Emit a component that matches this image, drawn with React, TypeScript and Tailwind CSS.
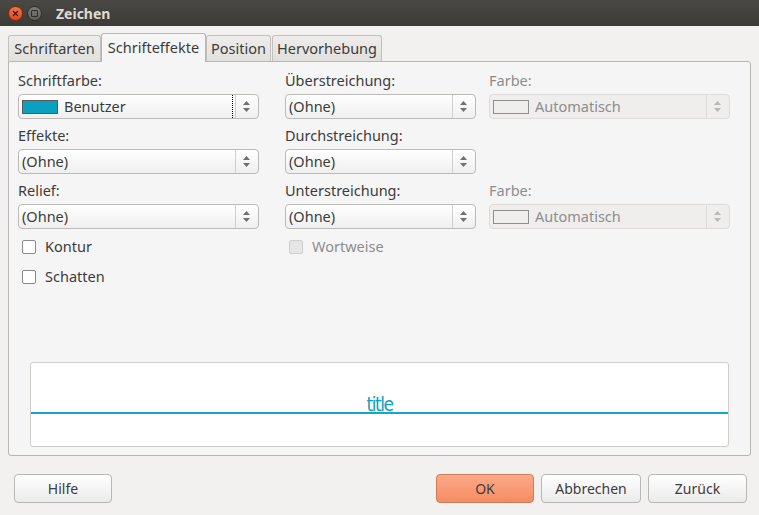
const font = { fontFamily: '"Noto Sans", "DejaVu Sans", sans-serif' };

function Spin({ dim }: { dim?: boolean }) {
  return (
    <div className={`flex h-full w-[22px] flex-col items-center justify-center gap-[3px] border-l ${dim ? "border-[#dcdcdc]" : "border-[#d0d0d0]"}`}>
      <svg width="7" height="4" viewBox="0 0 7 4"><path d="M0 4 L3.5 0 L7 4 Z" fill={dim ? "#b8b8b8" : "#6f6f6f"} /></svg>
      <svg width="7" height="4" viewBox="0 0 7 4"><path d="M0 0 L3.5 4 L7 0 Z" fill={dim ? "#b8b8b8" : "#6f6f6f"} /></svg>
    </div>
  );
}

function Select({ text, swatch, dim, focus }: { text: string; swatch?: string; dim?: boolean; focus?: boolean }) {
  return (
    <div
      className={`flex h-[25px] items-center rounded-[4px] border pl-[3px] pr-[1px] text-[14.5px] ${
        dim
          ? "border-[#dedcda] bg-[#efeeed] text-[#8d8d8d]"
          : "border-[#bdbbb8] bg-gradient-to-b from-white to-[#efefef] text-[#3c3c3c]"
      }`}
    >
      {swatch && (
        <div
          className={`mr-[6px] h-[14px] w-[36px] border ${dim ? "border-[#8f8f8f]" : "border-[#5a5a5a]"}`}
          style={{ background: swatch }}
        />
      )}
      <span className="flex-1 leading-none">{text}</span>
      {focus && <div className="mr-[2px] h-[23px] w-0 border-l border-dotted border-black" />}
      <Spin dim={dim} />
    </div>
  );
}

function Label({ children, dim }: { children: string; dim?: boolean }) {
  return <div className={`h-[30px] pt-[7px] text-[14.5px] leading-[18px] ${dim ? "text-[#8d8d8d]" : "text-[#3c3c3c]"}`}>{children}</div>;
}

function Check({ label, dim }: { label: string; dim?: boolean }) {
  return (
    <div className="flex h-[30px] items-center gap-[9px] pl-[4px] text-[14.5px]">
      <div className={`h-[14px] w-[14px] rounded-[2px] border ${dim ? "border-[#cfcfcf] bg-[#e6e6e6]" : "border-[#8a8a8a] bg-white"}`} />
      <span className={dim ? "text-[#8d8d8d]" : "text-[#3c3c3c]"}>{label}</span>
    </div>
  );
}

function Btn({ children, primary }: { children: string; primary?: boolean }) {
  return (
    <div
      className={`flex h-[29px] items-center justify-center rounded-[4px] border text-[14px] ${
        primary
          ? "border-[#d17a56] bg-gradient-to-b from-[#fba987] to-[#f48c64] text-[#3c3c3c]"
          : "border-[#b9b7b4] bg-gradient-to-b from-white to-[#ebebeb] text-[#3c3c3c]"
      }`}
    >
      {children}
    </div>
  );
}

export default function App() {
  return (
    <div className="flex h-[515px] w-[759px] flex-col bg-[#f2f1f0]" style={font}>
      {/* title bar */}
      <div className="flex h-[26px] items-center bg-gradient-to-b from-[#4a4945] to-[#3b3a36] pl-[8px]">
        <div className="flex h-[15px] w-[15px] items-center justify-center rounded-full border border-[#7a2a10] bg-gradient-to-b from-[#f4744a] to-[#e0481c]">
          <svg width="7" height="7" viewBox="0 0 7 7"><path d="M1 1 L6 6 M6 1 L1 6" stroke="#3b1a0c" strokeWidth="1.3" /></svg>
        </div>
        <div className="ml-[4px] flex h-[15px] w-[15px] items-center justify-center rounded-full border border-[#2e2d2a] bg-gradient-to-b from-[#7d7c78] to-[#5e5d59]">
          <div className="h-[7px] w-[7px] rounded-[1px] border border-[#2f2e2b]" />
        </div>
        <span className="ml-[14px] text-[14px] font-bold text-[#dfdbd2]">Zeichen</span>
      </div>

      {/* tabs */}
      <div className="mt-[6px] flex h-[29px] items-end pl-[8px] text-[14.5px] text-[#3c3c3c]">
        <div className="flex h-[26px] w-[93px] items-center justify-center rounded-t-[3px] border border-b-0 border-[#c2c0bc] bg-gradient-to-b from-[#eeedeb] to-[#e1e0dd]">Schriftarten</div>
        <div className="relative z-10 -mb-px flex h-[29px] w-[105px] items-center justify-center rounded-t-[3px] border border-b-0 border-[#b8b6b2] bg-[#f5f5f5]">Schrifteffekte</div>
        <div className="flex h-[26px] w-[65px] items-center justify-center rounded-t-[3px] border border-b-0 border-[#c2c0bc] bg-gradient-to-b from-[#eeedeb] to-[#e1e0dd]">Position</div>
        <div className="ml-[1px] flex h-[26px] w-[110px] items-center justify-center rounded-t-[3px] border border-b-0 border-[#c2c0bc] bg-gradient-to-b from-[#eeedeb] to-[#e1e0dd]">Hervorhebung</div>
      </div>

      {/* panel */}
      <div className="mx-[8px] h-[395px] rounded-b-[3px] rounded-tr-[3px] border border-[#b8b6b2] bg-[#f5f5f5] px-[9px] pt-[2px]">
        <div className="flex">
          <div className="w-[241px]">
            <Label>Schriftfarbe:</Label>
            <Select text="Benutzer" swatch="#0aa0c0" focus />
            <Label>Effekte:</Label>
            <Select text="(Ohne)" />
            <Label>Relief:</Label>
            <Select text="(Ohne)" />
            <div className="mt-[3px]">
              <Check label="Kontur" />
              <Check label="Schatten" />
            </div>
          </div>
          <div className="ml-[26px] w-[191px]">
            <Label>Überstreichung:</Label>
            <Select text="(Ohne)" />
            <Label>Durchstreichung:</Label>
            <Select text="(Ohne)" />
            <Label>Unterstreichung:</Label>
            <Select text="(Ohne)" />
            <div className="mt-[3px]">
              <Check label="Wortweise" dim />
            </div>
          </div>
          <div className="ml-[13px] w-[241px]">
            <Label dim>Farbe:</Label>
            <Select text="Automatisch" swatch="#efeeed" dim />
            <div className="h-[55px]" />
            <Label dim>Farbe:</Label>
            <Select text="Automatisch" swatch="#efeeed" dim />
          </div>
        </div>

        {/* preview */}
        <div className="mx-[12px] mt-[70px] h-[85px] rounded-[3px] border border-[#cfcdca] bg-white pt-[33px]">
          <div className="flex w-full items-end">
            <div className="h-[2px] flex-1 bg-[#17a6c4]" />
            <span
              className="inline-block border-b-2 border-[#17a6c4] text-[19px] leading-[16px] text-[#0aa0c0]"
              style={{ fontFamily: '"DejaVu Sans Condensed", "Liberation Sans Narrow", sans-serif', letterSpacing: "-1.5px" }}
            >
              title
            </span>
            <div className="h-[2px] flex-1 bg-[#17a6c4]" />
          </div>
        </div>
      </div>

      {/* buttons */}
      <div className="mt-[18px] flex pl-[14px] pr-[12px]">
        <div className="w-[98px]"><Btn>Hilfe</Btn></div>
        <div className="flex-1" />
        <div className="w-[98px]"><Btn primary>OK</Btn></div>
        <div className="ml-[7px] w-[100px]"><Btn>Abbrechen</Btn></div>
        <div className="ml-[7px] w-[99px]"><Btn>Zurück</Btn></div>
      </div>
    </div>
  );
}
